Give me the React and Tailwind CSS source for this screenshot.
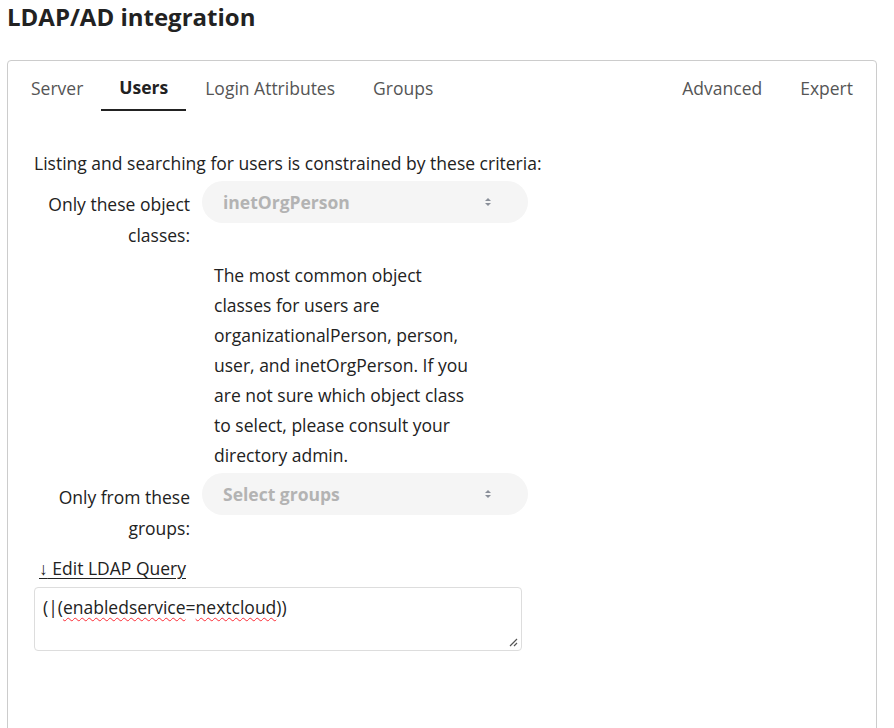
import React from "react";

function Arrows() {
  return (
    <svg width="8" height="10" viewBox="0 0 8 10" className="shrink-0">
      <path d="M4 1 L7 4 H1 Z" fill="#8a8f99" />
      <path d="M4 9 L7 6 H1 Z" fill="#8a8f99" />
    </svg>
  );
}

function FakeSelect({ value }) {
  return (
    <div className="w-[326px] h-[42px] rounded-full bg-[#f5f5f5] flex items-center justify-between pl-[21px] pr-[36px]">
      <span className="font-bold text-[#b3b3b3]">{value}</span>
      <Arrows />
    </div>
  );
}

export default function App() {
  const tabs = [
    { label: "Server", cls: "pl-0 pr-[18px]" },
    { label: "Users", cls: "px-[18px]" },
    { label: "Login Attributes", cls: "pl-[19px] pr-[20px]" },
    { label: "Groups", cls: "px-[18px]" },
  ];
  return (
    <div
      className="w-[894px] h-[728px] overflow-hidden bg-white text-[#222] text-[17.5px]"
      style={{ fontFamily: '"Open Sans", "Noto Sans", sans-serif' }}
    >
      <h2 className="px-[7px] pt-0 text-[24px] font-bold leading-[34px] text-[#222]">
        LDAP/AD integration
      </h2>

      <div className="mt-[26px] ml-[7px] w-[870px] h-[700px] border border-[#ccc] rounded-[4px] px-[23px]">
        {/* Tabs */}
        <div className="flex items-center h-[46px] mt-[4px] text-[#555]">
          {tabs.map((t) =>
            t.label === "Users" ? (
              <div
                key={t.label}
                className={"h-full flex items-center font-bold text-[#222] border-b-2 border-[#222] " + t.cls}
              >
                {t.label}
              </div>
            ) : (
              <div key={t.label} className={"h-full flex items-center " + t.cls}>
                {t.label}
              </div>
            )
          )}
          <div className="flex-1" />
          <div className="px-[19px]">Advanced</div>
          <div className="pl-[19px] pr-0">Expert</div>
        </div>

        {/* Content */}
        <div className="pt-[37px] pl-[3px] leading-[30px]">
          <p>Listing and searching for users is constrained by these criteria:</p>

          <div className="flex items-start mt-[3px]">
            <label className="w-[156px] text-right pt-[8px] leading-[31px]">
              Only these object classes:
            </label>
            <div className="ml-[12px]">
              <FakeSelect value="inetOrgPerson" />
            </div>
          </div>

          <div className="ml-[180px] w-[262px] mt-[9px]">
            The most common object classes for users are organizationalPerson, person,
            user, and inetOrgPerson. If you are not sure which object class to select,
            please consult your directory admin.
          </div>

          <div className="flex items-start mt-[3px]">
            <label className="w-[156px] text-right pt-[9px] leading-[31px]">
              Only from these groups:
            </label>
            <div className="ml-[12px]">
              <FakeSelect value="Select groups" />
            </div>
          </div>

          <div className="mt-[9px] pl-[5px]">
            <a className="underline text-[#222] underline-offset-[3px]">
              <span className="font-bold">↓</span> Edit LDAP Query
            </a>
          </div>

          <div className="relative mt-[4px] w-[488px] h-[64px] border border-[#ddd] rounded-[4px] px-[8px] pt-[4px] text-[#222]">
            (|(
            <span className="underline decoration-wavy decoration-red-500 decoration-1 underline-offset-[3px]">
              enabledservice
            </span>
            =
            <span className="underline decoration-wavy decoration-red-500 decoration-1 underline-offset-[3px]">
              nextcloud
            </span>
            ))
            <svg
              width="10"
              height="10"
              viewBox="0 0 10 10"
              className="absolute right-[3px] bottom-[3px]"
            >
              <path d="M9 2 L2 9 M9 6 L6 9" stroke="#555" strokeWidth="1.2" />
            </svg>
          </div>
        </div>
      </div>
    </div>
  );
}
